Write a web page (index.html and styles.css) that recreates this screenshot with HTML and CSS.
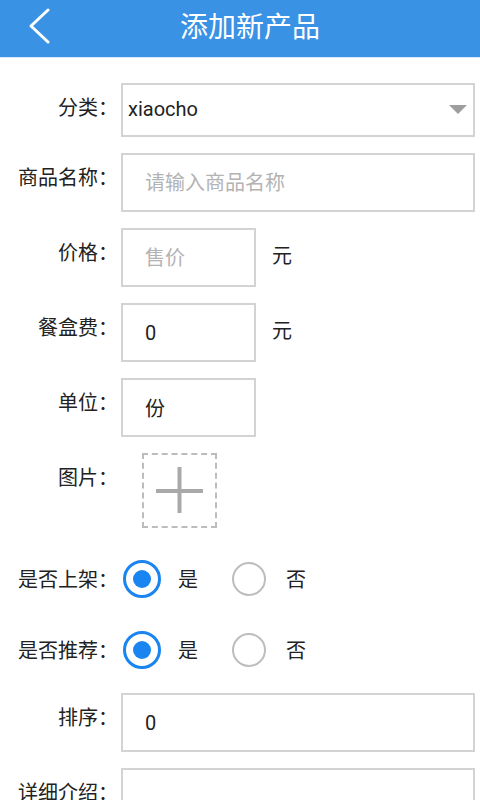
FILE: index.html
```html
<!DOCTYPE html>
<html>
<head>
    <title>添加新产品</title>
    <meta name="viewport" content="width=device-width, initial-scale=1.0">
    <link rel="stylesheet" href="styles.css">
</head>
<body>
    <header class="topbar">
        <a class="back" href="#">
            <svg width="22" height="36" viewBox="0 0 22 36">
                <polyline points="19,2 2,18 19,34" fill="none" stroke="#fff" stroke-width="3" stroke-linecap="round" stroke-linejoin="round"/>
            </svg>
        </a>
        <h1>添加新产品</h1>
        <span></span>
    </header>

    <form class="form">
        <div class="row">
            <label>分类：</label>
            <div class="select">
                <span>xiaocho</span>
                <svg class="caret" width="18" height="10" viewBox="0 0 18 10">
                    <polygon points="0,0 18,0 9,9" fill="#9e9e9e"/>
                </svg>
            </div>
        </div>

        <div class="row">
            <label>商品名称：</label>
            <input class="field" type="text" placeholder="请输入商品名称">
        </div>

        <div class="row">
            <label>价格：</label>
            <input class="field short" type="text" placeholder="售价">
            <span class="unit">元</span>
        </div>

        <div class="row">
            <label>餐盒费：</label>
            <input class="field short" type="text" value="0">
            <span class="unit">元</span>
        </div>

        <div class="row">
            <label>单位：</label>
            <input class="field short" type="text" value="份">
        </div>

        <div class="row pic-row">
            <label>图片：</label>
            <div class="upload">
                <svg width="48" height="48" viewBox="0 0 48 48">
                    <rect x="0" y="22" width="47" height="4" fill="#a9a9a9"/>
                    <rect x="21.5" y="0" width="4" height="46" fill="#a9a9a9"/>
                </svg>
            </div>
        </div>

        <div class="row radio-row">
            <label>是否上架：</label>
            <span class="radio checked"></span>
            <span class="opt">是</span>
            <span class="radio"></span>
            <span class="opt">否</span>
        </div>

        <div class="row radio-row">
            <label>是否推荐：</label>
            <span class="radio checked"></span>
            <span class="opt">是</span>
            <span class="radio"></span>
            <span class="opt">否</span>
        </div>

        <div class="row">
            <label>排序：</label>
            <input class="field" type="text" value="0">
        </div>

        <div class="row">
            <label>详细介绍：</label>
            <textarea class="field area"></textarea>
        </div>
    </form>
</body>
</html>
```

FILE: styles.css
```css
body{
  margin: 0;
  font-family: Roboto, "Noto Sans CJK SC", sans-serif;
  background: #fff;
  color: #222;
}
.topbar{
  display: grid;
  grid-template-columns: 80px 1fr 60px;
  align-items: center;
  height: 57px;
  background-color: #3a92e4;
  border-bottom: 1px solid #d6e8f8;
}
.back{
  display: flex;
  margin-left: 29px;
  padding-bottom: 6px;
}
.topbar h1{
  margin: 0;
  text-align: center;
  color: #fff;
  font-size: 28px;
  font-weight: normal;
  line-height: 36px;
  padding-bottom: 8px;
  font-family: "Noto Sans CJK SC", sans-serif;
}
.form{
  display: flex;
  flex-direction: column;
  gap: 16px;
  padding: 25px 5px 40px 0;
}
.row{
  display: flex;
  align-items: flex-start;
}
.row label{
  width: 118px;
  flex-shrink: 0;
  margin-right: 3px;
  padding-top: 9px;
  text-align: right;
  font-size: 20px;
  line-height: 30px;
  font-family: "Noto Sans CJK SC", sans-serif;
}
.select{
  flex: 1;
  display: flex;
  align-items: center;
  height: 54px;
  box-sizing: border-box;
  border: 2px solid #d3d3d3;
  padding: 0 6px 3px 5px;
  font-size: 20px;
}
.select span{
  flex: 1;
}
.caret{
  margin-top: 3px;
}
.field{
  flex: 1;
  height: 59px;
  box-sizing: border-box;
  border: 2px solid #d3d3d3;
  border-radius: 0;
  padding: 0 22px;
  font-size: 20px;
  font-family: Roboto, "Noto Sans CJK SC", sans-serif;
  color: #222;
  outline: none;
}
.field::placeholder{
  color: #b3b3b3;
}
.short{
  flex: none;
  width: 135px;
}
.unit{
  margin-left: 16px;
  line-height: 54px;
  font-size: 20px;
  font-family: "Noto Sans CJK SC", sans-serif;
}
.pic-row{
  padding-bottom: 7px;
}
.upload{
  display: flex;
  align-items: center;
  justify-content: center;
  width: 75px;
  height: 75px;
  box-sizing: border-box;
  margin-left: 21px;
  border: 2px dashed #bcbcbc;
}
.radio-row{
  align-items: center;
  height: 55px;
}
.radio-row label{
  padding-top: 0;
}
.radio{
  box-sizing: border-box;
  width: 34px;
  height: 34px;
  border-radius: 50%;
  border: 2px solid #bdbdbd;
  margin-left: 34px;
}
.radio.checked{
  width: 38px;
  height: 38px;
  margin-left: 2px;
  border: 3px solid #1a84f0;
  display: flex;
  align-items: center;
  justify-content: center;
}
.radio.checked::after{
  content: "";
  width: 18px;
  height: 18px;
  border-radius: 50%;
  background: #1a84f0;
}
.opt{
  margin-left: 20px;
  font-size: 20px;
  font-family: "Noto Sans CJK SC", sans-serif;
}
.radio.checked + .opt{
  margin-left: 17px;
}
.area{
  height: 110px;
  resize: none;
}
```
